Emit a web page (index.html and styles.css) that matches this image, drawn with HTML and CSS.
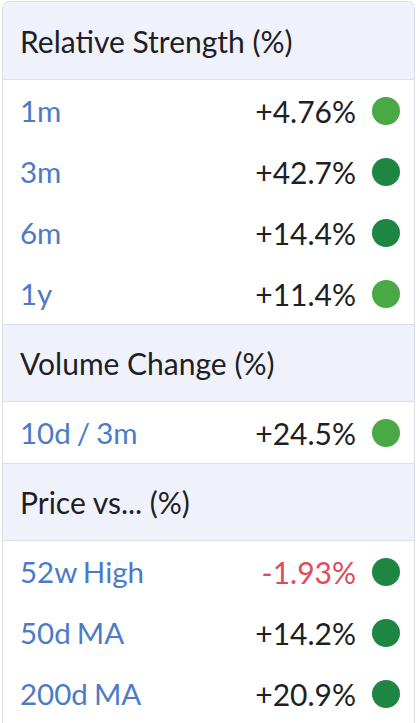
FILE: index.html
```html
<!DOCTYPE html>
<html>
<head>
<meta charset="utf-8">
<link rel="stylesheet" href="styles.css">
</head>
<body>
<div class="card">
  <div class="head">Relative Strength (%)</div>
  <div class="rows">
    <div class="row"><span class="label">1m</span><span class="val">+4.76%</span><span class="dot light"></span></div>
    <div class="row"><span class="label">3m</span><span class="val">+42.7%</span><span class="dot dark"></span></div>
    <div class="row"><span class="label">6m</span><span class="val">+14.4%</span><span class="dot dark"></span></div>
    <div class="row"><span class="label">1y</span><span class="val">+11.4%</span><span class="dot light"></span></div>
  </div>
  <div class="head">Volume Change (%)</div>
  <div class="rows">
    <div class="row"><span class="label">10d / 3m</span><span class="val">+24.5%</span><span class="dot light"></span></div>
  </div>
  <div class="head">Price vs... (%)</div>
  <div class="rows last">
    <div class="row"><span class="label">52w High</span><span class="val neg">-1.93%</span><span class="dot dark"></span></div>
    <div class="row"><span class="label">50d MA</span><span class="val">+14.2%</span><span class="dot dark"></span></div>
    <div class="row"><span class="label">200d MA</span><span class="val">+20.9%</span><span class="dot dark"></span></div>
  </div>
</div>
</body>
</html>
```
FILE: styles.css
```css
html, body {
  margin: 0;
  padding: 0;
  background: #ffffff;
}
body {
  padding: 1px 1px 0 2px;
  font-family: Lato, "Open Sans", sans-serif;
  color: #1d2024;
}
.card {
  border: 1px solid #dde0e6;
  border-bottom: none;
  border-radius: 7px 7px 0 0;
  overflow: hidden;
  height: 740px;
}
.head {
  height: 77px;
  box-sizing: border-box;
  display: flex;
  align-items: center;
  padding-left: 17px;
  background: #eff2fa;
  border-bottom: 1px solid #dcdfe5;
  font-size: 30px;
}
.card > .head:first-child {
  height: 78px;
}
.rows {
  border-bottom: 1px solid #dcdfe5;
}
.rows.last {
  border-bottom: none;
}
.row {
  height: 61px;
  display: flex;
  align-items: center;
  padding: 0 14px 0 17px;
  font-size: 30px;
}
.label {
  flex: 1;
  color: #4b7bc7;
  font-size: 29.5px;
  word-spacing: -1.5px;
}
.val {
  color: #1d2024;
}
.val.neg {
  color: #e14a5b;
}
.dot {
  width: 28px;
  height: 28px;
  border-radius: 50%;
  margin-left: 16px;
}
.dot.light {
  background: #48a945;
}
.dot.dark {
  background: #1f8543;
}
```
